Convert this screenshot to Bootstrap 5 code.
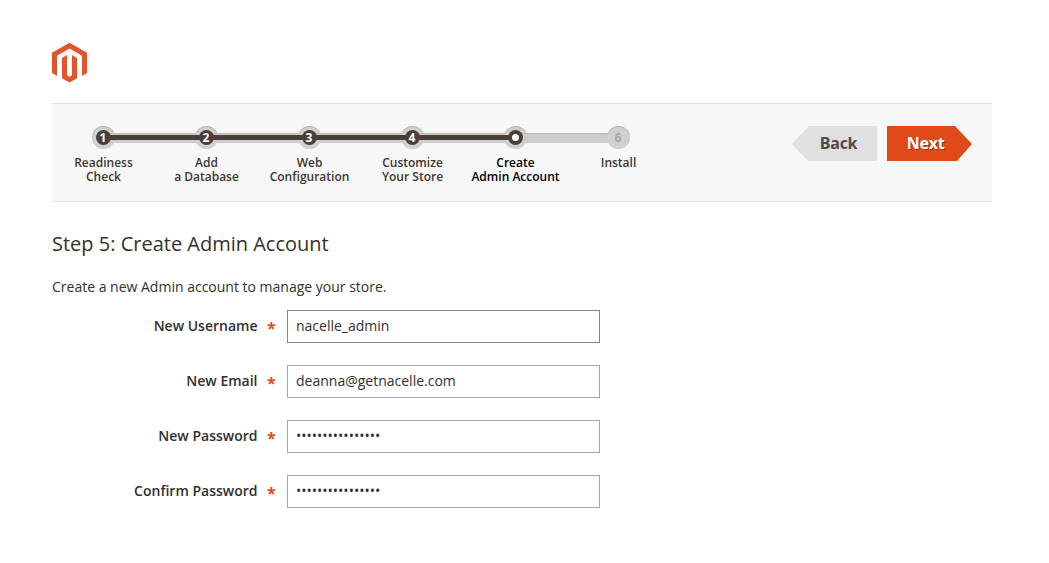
<!DOCTYPE html>
<html lang="en">
<head>
<meta charset="utf-8">
<meta name="viewport" content="width=device-width, initial-scale=1">
<title>Create Admin Account</title>
<link href="https://cdn.jsdelivr.net/npm/bootstrap@5.3.0/dist/css/bootstrap.min.css" rel="stylesheet">
<style>
body{font-family:"Open Sans","Noto Sans",sans-serif;font-size:14px;line-height:19px;color:#303030;background:#fff}
.page{width:940px;margin-left:52px;padding-top:42px}
.logo{display:block;margin-bottom:20px}
.wizard{height:99px;background:#f7f7f7;border-top:1px solid #dfdfdf;border-bottom:1px solid #dfdfdf;padding:22px 20px 0 0}
.steps{list-style:none;font-size:12px;line-height:14px;font-weight:600;color:#41362f}
.steps li{width:103px;position:relative}
.steps li+li::before{content:"";position:absolute;z-index:0;left:-51.5px;top:7px;width:103px;height:10px;background:#cdcdcd;border-top:1px solid #b9b9b9}
.steps li.done+li::after{content:"";position:absolute;z-index:2;left:-51.5px;top:9px;width:103px;height:5px;background:#493f38}
.dot{position:relative;z-index:1;width:23px;height:23px;border-radius:50%;background:#d0d0d0;box-shadow:inset 0 1px 1px #b5b5b5;margin-bottom:7px}
.dot i{position:relative;width:15px;height:15px;border-radius:50%;background:#493f38;color:#fff;font-style:normal;font-weight:700;line-height:15px;text-indent:-1px}
.steps li.done .dot,.steps li.now .dot{z-index:auto}
.steps li.done .dot i,.steps li.now .dot i{z-index:3}
.steps li.now{color:#000}
.now .hole{width:7px;height:7px;border-radius:50%;background:#fff}
.todo .dot i{background:none;color:#a6a6a6}
.arrow{width:85px;height:35px;border:0;border-radius:0;padding:0;font-size:16px;line-height:35px;font-weight:700;letter-spacing:-.25px}
.back,.back:hover{background:#e0e0e0;color:#514943;padding-left:8px;clip-path:polygon(0 18px,17px 0,100% 0,100% 100%,16px 100%)}
.next,.next:hover{background:#e04a18;color:#fff;padding-right:8px;text-shadow:1px 1px 0 rgba(0,0,0,.3);clip-path:polygon(0 0,68px 0,100% 18px,70px 100%,0 100%)}
h1{font-size:20px;line-height:28px;font-weight:400;color:#37302a;margin:28px 0 19px}
.intro{margin-bottom:14px}
.entry{height:33px;margin-bottom:22px}
.entry label{width:205.5px;font-weight:600;line-height:16px;padding-top:8px;text-align:right}
.star{width:29.5px;padding-left:9.5px;color:#e04a18;font-size:16px;font-weight:700;padding-top:9px}
.entry .form-control{width:313px;height:33px;font-size:14px;line-height:19px;color:#303030;border:1px solid #a6a6a6;border-radius:0;padding:0 8px 2px}
.entry .form-control.active{border-color:#858585}
</style>
</head>
<body>
<main class="page">
  <svg class="logo" width="35" height="41" viewBox="0 0 35 41" aria-label="Logo">
    <path fill="#e0552b" d="M17.5.7 35 10.8V31l-5 2.9V13.7L17.5 6.5 5 13.7v20.2L0 31V10.8z"/>
    <path fill="#e0552b" d="M15 13v20.3l2.5 1.5 2.5-1.5V13l5 2.9v20.3l-7.5 4.3-7.5-4.3V15.9z"/>
  </svg>
  <nav class="wizard d-flex justify-content-between">
    <ol class="steps d-flex text-center p-0 m-0">
      <li class="done"><div class="dot mx-auto d-flex align-items-center justify-content-center"><i>1</i></div>Readiness<br>Check</li>
      <li class="done"><div class="dot mx-auto d-flex align-items-center justify-content-center"><i>2</i></div>Add<br>a Database</li>
      <li class="done"><div class="dot mx-auto d-flex align-items-center justify-content-center"><i>3</i></div>Web<br>Configuration</li>
      <li class="done"><div class="dot mx-auto d-flex align-items-center justify-content-center"><i>4</i></div>Customize<br>Your Store</li>
      <li class="now"><div class="dot mx-auto d-flex align-items-center justify-content-center"><i class="d-flex align-items-center justify-content-center"><span class="hole"></span></i></div>Create<br>Admin Account</li>
      <li class="todo"><div class="dot mx-auto d-flex align-items-center justify-content-center"><i>6</i></div>Install</li>
    </ol>
    <div class="d-flex" style="gap:10px">
      <button type="button" class="btn arrow back">Back</button>
      <button type="button" class="btn arrow next">Next</button>
    </div>
  </nav>
  <h1>Step 5: Create Admin Account</h1>
  <p class="intro">Create a new Admin account to manage your store.</p>
  <form>
    <div class="entry d-flex"><label for="user">New Username</label><span class="star">*</span><input class="form-control active" id="user" type="text" value="nacelle_admin"></div>
    <div class="entry d-flex"><label for="email">New Email</label><span class="star">*</span><input class="form-control" id="email" type="email" value="deanna@getnacelle.com"></div>
    <div class="entry d-flex"><label for="pass">New Password</label><span class="star">*</span><input class="form-control" id="pass" type="password" value="abcdefgh12345678"></div>
    <div class="entry d-flex"><label for="confirm">Confirm Password</label><span class="star">*</span><input class="form-control" id="confirm" type="password" value="abcdefgh12345678"></div>
  </form>
</main>
<script src="https://cdn.jsdelivr.net/npm/bootstrap@5.3.0/dist/js/bootstrap.bundle.min.js"></script>
</body>
</html>
